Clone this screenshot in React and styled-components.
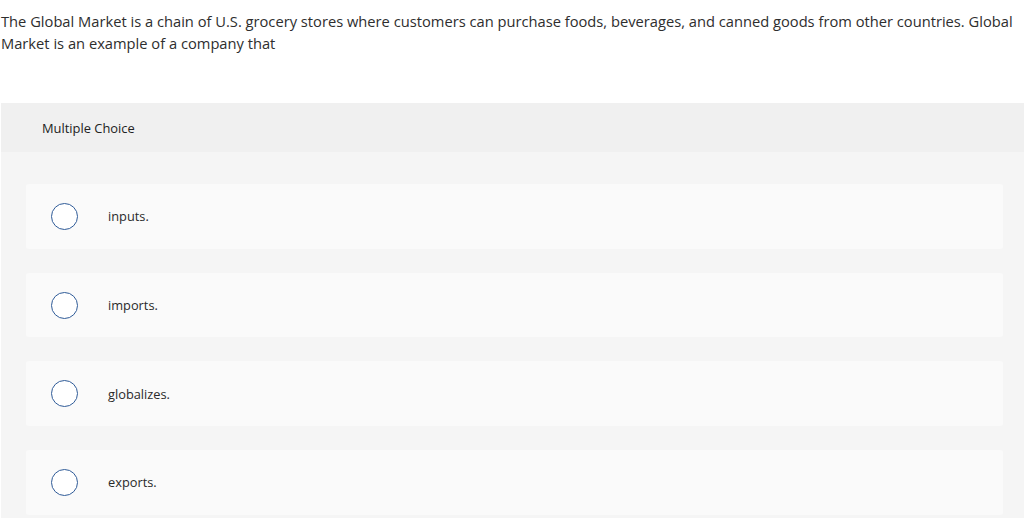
import React from "react";
import styled, { createGlobalStyle } from "styled-components";

const GlobalStyle = createGlobalStyle`
  body {
    margin: 0;
    background: #fff;
    font-family: "Open Sans", "Liberation Sans", sans-serif;
    color: #333;
  }
`;

const options = ["inputs.", "imports.", "globalizes.", "exports."];

export default function App() {
  return (
    <>
      <GlobalStyle />
      <Question>
        The Global Market is a chain of U.S. grocery stores where customers can
        purchase foods, beverages, and canned goods from other countries. Global
        Market is an example of a company that
      </Question>
      <Panel>
        <Header>Multiple Choice</Header>
        <Choices>
          {options.map((text) => (
            <Choice key={text}>
              <Radio />
              <ChoiceText>{text}</ChoiceText>
            </Choice>
          ))}
        </Choices>
      </Panel>
    </>
  );
}

const Question = styled.p`
  margin: 10px 0 0 1px;
  font-size: 14.7px;
  line-height: 22px;
  color: #2e2e2e;
`;

const Panel = styled.section`
  margin: 49px 0 0 1px;
  background: #f5f5f5;
`;

const Header = styled.div`
  height: 49px;
  display: flex;
  align-items: center;
  padding-left: 41px;
  background: #f0f0f0;
  font-size: 12.9px;
  color: #222;
`;

const Choices = styled.div`
  display: flex;
  flex-direction: column;
  gap: 24px;
  padding: 32px 21px 4px 25px;
`;

const Choice = styled.label`
  height: 64.7px;
  display: flex;
  align-items: center;
  background: #fafafa;
  border-radius: 3px;
  padding-left: 25px;
`;

const Radio = styled.span`
  width: 25px;
  height: 25px;
  border: 1px solid #2f5b98;
  border-radius: 50%;
  background: #fff;
  flex-shrink: 0;
`;

const ChoiceText = styled.span`
  margin-left: 30px;
  font-size: 12.8px;
  color: #2a2a2a;
`;
